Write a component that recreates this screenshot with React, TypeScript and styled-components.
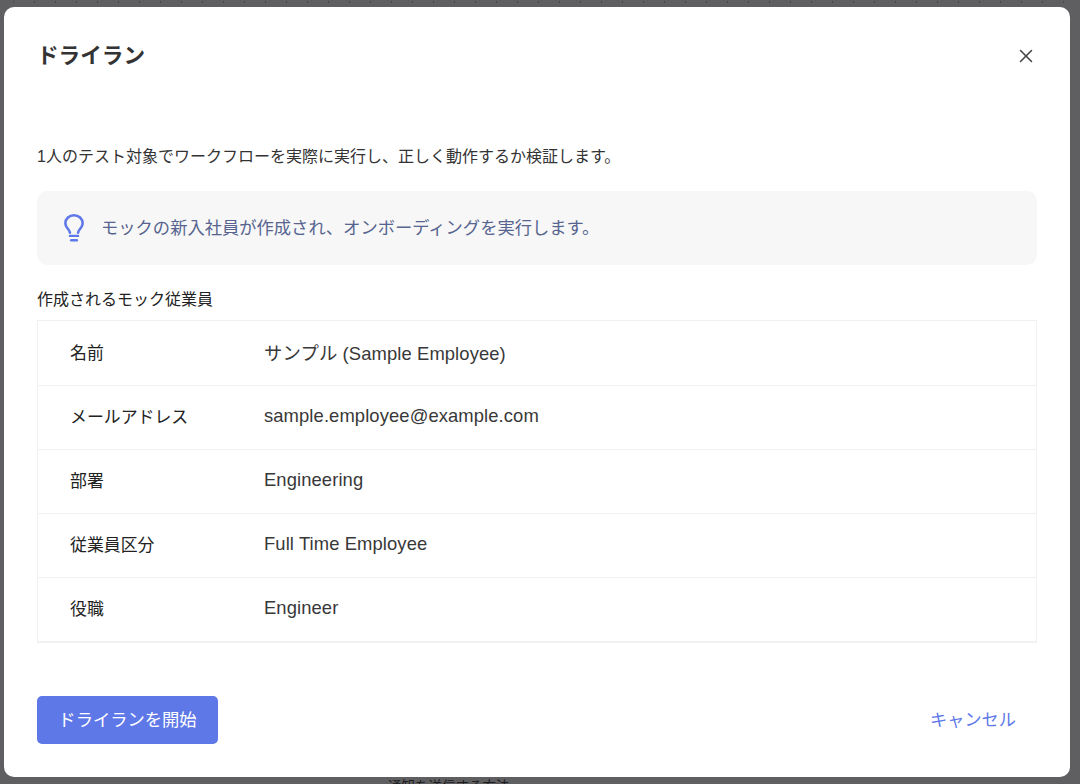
import { X } from "lucide-react";
import styled, { createGlobalStyle } from "styled-components";

const employeeRows = [
  { label: "名前", value: "サンプル (Sample Employee)" },
  { label: "メールアドレス", value: "sample.employee@example.com" },
  { label: "部署", value: "Engineering" },
  { label: "従業員区分", value: "Full Time Employee" },
  { label: "役職", value: "Engineer" },
];

const BulbIcon = () => (
  <svg width="22" height="30" viewBox="0 0 24 32" fill="none" stroke="#5f78e8" strokeLinecap="round">
    <path
      d="M7.6 21.2C7.3 18.8 5.9 17.6 4.6 16 3.4 14.6 2.6 12.8 2.6 10.9 2.6 5.8 6.8 2 12 2s9.4 3.8 9.4 8.9c0 1.9-.8 3.7-2 5.1-1.3 1.6-2.7 2.8-3 5.2"
      strokeWidth="2.8"
    />
    <path d="M7.6 24.6h8.8" strokeWidth="2.6" />
    <path d="M9 29.4h6" strokeWidth="2.8" />
  </svg>
);

const App = () => {
  return (
    <>
      <GlobalStyle />
      <Backdrop>
        <BehindText>通知を送信する方法</BehindText>
        <Dialog>
          <Header>
            <Title>ドライラン</Title>
            <CloseBtn aria-label="閉じる">
              <X size={22} strokeWidth={1.7} />
            </CloseBtn>
          </Header>

          <Description>
            1人のテスト対象でワークフローを実際に実行し、正しく動作するか検証します。
          </Description>

          <Hint>
            <BulbIcon />
            <HintText>モックの新入社員が作成され、オンボーディングを実行します。</HintText>
          </Hint>

          <SectionLabel>作成されるモック従業員</SectionLabel>
          <InfoTable>
            {employeeRows.map((row) => (
              <InfoRow key={row.label}>
                <InfoLabel>{row.label}</InfoLabel>
                <InfoValue>{row.value}</InfoValue>
              </InfoRow>
            ))}
          </InfoTable>

          <Footer>
            <PrimaryBtn>ドライランを開始</PrimaryBtn>
            <CancelBtn>キャンセル</CancelBtn>
          </Footer>
        </Dialog>
      </Backdrop>
    </>
  );
};

export default App;

const GlobalStyle = createGlobalStyle`
  html, body {
    margin: 0;
    padding: 0;
    height: 100%;
    overflow: hidden;
  }
  body {
    font-family: "Liberation Sans", "Noto Sans CJK JP", sans-serif;
    color: #333;
  }
  * {
    box-sizing: border-box;
  }
`;
const Backdrop = styled.div`
  position: relative;
  width: 1080px;
  height: 784px;
  padding: 7px 10px 7px 4px;
  background-color: #5f5f61;
  background-image: repeating-linear-gradient(
    to right,
    #48484a 0,
    #48484a 1px,
    transparent 1px,
    transparent 21px
  );
  background-size: 100% 2px;
  background-repeat: no-repeat;
  background-position: 13px 1px;
`;
const BehindText = styled.span`
  position: absolute;
  left: 388px;
  top: 775px;
  font-size: 13.5px;
  color: #1c1c1e;
`;
const Dialog = styled.div`
  position: relative;
  display: flex;
  flex-direction: column;
  height: 770px;
  padding: 0 33px;
  background: #fff;
  border-radius: 10px;
`;
const Header = styled.div`
  display: flex;
  justify-content: space-between;
  align-items: center;
  height: 96px;
`;
const Title = styled.h2`
  margin: -4px 0 0;
  font-size: 21.6px;
  font-weight: 700;
  color: #333;
`;
const CloseBtn = styled.button`
  display: flex;
  margin: 2px 0 0;
  padding: 0;
  border: none;
  background: none;
  color: #444;
`;
const Description = styled.p`
  margin: 43px 0 0;
  font-size: 16px;
  line-height: 22px;
  color: #333;
`;
const Hint = styled.div`
  display: flex;
  align-items: center;
  gap: 16px;
  height: 74px;
  margin-top: 23px;
  padding-left: 26px;
  background: #f7f7f7;
  border-radius: 10px;
`;
const HintText = styled.span`
  margin-top: -3px;
  font-size: 17.3px;
  color: #56648f;
`;
const SectionLabel = styled.div`
  margin-top: 25px;
  font-size: 16px;
  line-height: 20px;
  color: #222;
`;
const InfoTable = styled.div`
  margin-top: 10px;
  border: 1px solid #f1f1f2;
  border-bottom-width: 2px;
`;
const InfoRow = styled.div`
  display: flex;
  align-items: center;
  height: 64px;
  padding-left: 32px;
  padding-bottom: 4px;
  border-bottom: 1px solid #f1f1f2;
  &:first-child {
    height: 65px;
  }
  &:last-child {
    height: 63px;
    border-bottom: none;
  }
`;
const InfoLabel = styled.div`
  width: 194px;
  font-size: 16.9px;
  color: #222;
`;
const InfoValue = styled.div`
  margin-top: 1px;
  font-size: 18.4px;
  letter-spacing: 0.1px;
  color: #383838;
`;
const Footer = styled.div`
  display: flex;
  justify-content: space-between;
  align-items: center;
  margin-top: 53px;
`;
const PrimaryBtn = styled.button`
  width: 181px;
  height: 48px;
  padding: 0 0 3px;
  border: none;
  border-radius: 5px;
  background: #5f78e8;
  color: #fff;
  font-family: inherit;
  font-size: 17.3px;
  font-weight: 400;
`;
const CancelBtn = styled.button`
  margin-right: 21px;
  padding: 0 0 3px;
  border: none;
  background: none;
  color: #5f78e8;
  font-family: inherit;
  font-size: 17.2px;
`;
